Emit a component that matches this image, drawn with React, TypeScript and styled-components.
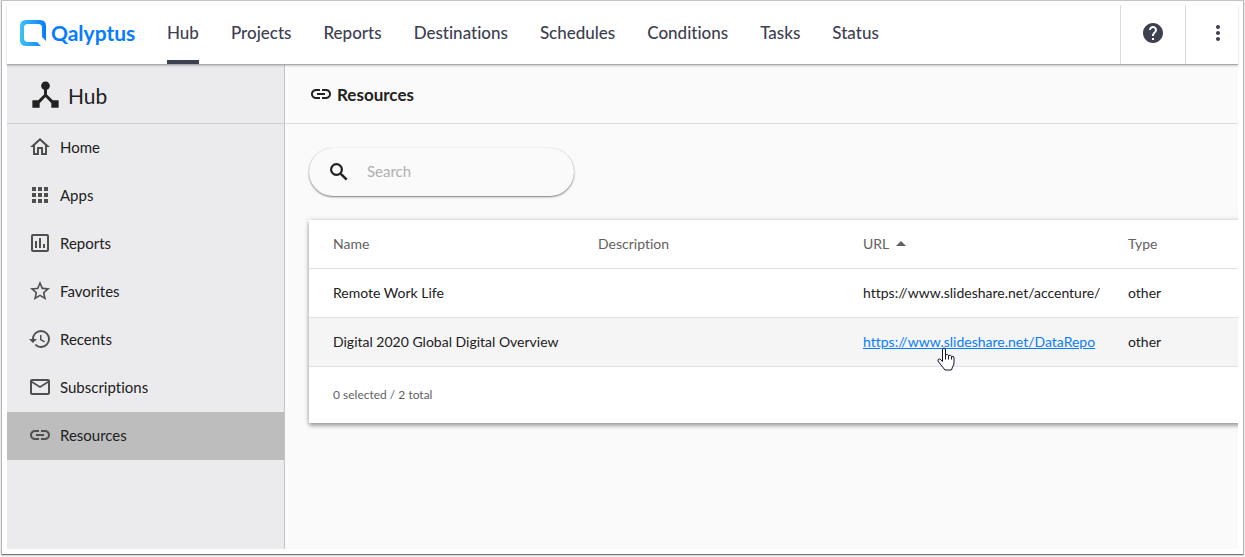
import React from "react";
import styled, { createGlobalStyle } from "styled-components";
import {
  MdApps,
  MdDeviceHub,
  MdHelp,
  MdHistory,
  MdLink,
  MdMailOutline,
  MdMoreVert,
  MdOutlineAssessment,
  MdOutlineHome,
  MdStarBorder,
} from "react-icons/md";

const GlobalStyle = createGlobalStyle`
  *, *::before, *::after { box-sizing: border-box; }
  body {
    margin: 0;
    background: #f4f4f4;
    color: #212121;
    font-family: Lato, "Liberation Sans", sans-serif;
    font-size: 15px;
    font-variant-ligatures: none;
  }
  button, input { font: inherit; color: inherit; }
`;

const Frame = styled.div`
  display: flex;
  flex-direction: column;
  min-height: calc(100vh - 4px);
  margin: 1px 2px 3px;
  padding: 4px 5px 5px;
  background: #fff;
  box-shadow: 0 0 1px 1px rgba(0, 0, 0, 0.2), 0 1px 1px rgba(0, 0, 0, 0.4);
`;

const TopBar = styled.header`
  position: relative;
  display: flex;
  height: 60px;
  padding-left: 13px;
  border-bottom: 1px solid #a9a9ab;
  box-shadow: 0 1px 2px rgba(0, 0, 0, 0.2);
  background: #fff;
  color: #3d4051;
`;

const Brand = styled.a`
  display: flex;
  align-items: center;
  gap: 5px;
  width: 147px;
  padding-bottom: 4px;
  color: #087cff;
  font-size: 21px;
  font-weight: 700;
  text-decoration: none;
`;

const Nav = styled.nav`
  display: flex;
  flex: 1;
  gap: 32px;
`;

const NavLink = styled.a<{ $active?: boolean }>`
  display: flex;
  align-items: center;
  border-bottom: 4px solid ${(p) => (p.$active ? "#3d4051" : "transparent")};
  color: inherit;
  font-size: 17px;
  font-weight: 500;
  text-decoration: none;
`;

const BarButton = styled.button<{ $narrow?: boolean }>`
  display: flex;
  align-items: center;
  justify-content: center;
  width: ${(p) => (p.$narrow ? 53 : 65)}px;
  padding: 0 0 4px;
  padding-left: ${(p) => (p.$narrow ? 12 : 0)}px;
  border: 0;
  border-left: 1px solid #dcdcdc;
  background: none;
`;

const Body = styled.div`
  display: flex;
  flex: 1;
`;

const SideBar = styled.aside`
  flex: none;
  width: 278px;
  border-right: 1px solid #c4c4c6;
  background: #ebebed;
`;

const SideTitle = styled.h1`
  display: flex;
  align-items: center;
  gap: 5px;
  height: 59px;
  margin: 0;
  padding-left: 21px;
  border-bottom: 1px solid #cfcfd1;
  font-size: 21px;
  font-weight: 400;
`;

const SideTitleText = styled.span`
  padding-top: 2px;
`;

const SideLink = styled.a<{ $active?: boolean }>`
  display: flex;
  align-items: center;
  gap: 8px;
  height: 48px;
  padding: 0 0 2px 21px;
  background: ${(p) => (p.$active ? "#bdbdbd" : "transparent")};
  color: #212121;
  text-decoration: none;

  svg { color: #4f4f50; }
`;

const Main = styled.main`
  flex: 1;
  min-width: 0;
  overflow: hidden;
  background: #fafafa;
`;

const PageTitle = styled.h2`
  display: flex;
  align-items: center;
  gap: 4px;
  height: 59px;
  margin: 0;
  padding-left: 24px;
  border-bottom: 1px solid #dedede;
  font-size: 17px;
  font-weight: 700;
`;

const Content = styled.div`
  padding: 24px;
`;

const SearchBox = styled.label`
  display: flex;
  align-items: center;
  gap: 16px;
  width: 265px;
  height: 48px;
  margin-bottom: 24px;
  padding: 0 24px 0 18px;
  border-radius: 24px;
  box-shadow: 0 1px 2px rgba(0, 0, 0, 0.5), 0 0 1px rgba(0, 0, 0, 0.1);
`;

const SearchInput = styled.input`
  flex: 1;
  min-width: 0;
  padding: 0 0 2px;
  border: 0;
  outline: 0;
  background: none;

  &::placeholder { color: #b0b0b0; opacity: 1; }
`;

const Card = styled.section`
  width: max(100%, 1084px);
  background: #fff;
  box-shadow: 0 3px 4px rgba(0, 0, 0, 0.3), 0 0 5px rgba(0, 0, 0, 0.2);
`;

const Table = styled.table`
  width: 100%;
  border-collapse: separate;
  border-spacing: 0;
  table-layout: fixed;
  font-size: 14px;
`;

const Col = styled.col<{ $first?: boolean }>`
  width: ${(p) => (p.$first ? 289 : 265)}px;
`;

const HeadCell = styled.th`
  height: 49px;
  padding: 0 24px 2px 0;
  border-bottom: 1px solid #e0e0e0;
  color: #616161;
  font-weight: 400;
  text-align: left;

  &:first-child { padding-left: 24px; }
`;

const Sort = styled.button`
  display: flex;
  align-items: center;
  gap: 7px;
  padding: 0;
  border: 0;
  background: none;
`;

const Row = styled.tr<{ $hover?: boolean }>`
  background: ${(p) => (p.$hover ? "#f5f5f5" : "#fff")};
`;

const Cell = styled.td`
  height: 49px;
  padding: 0 24px 2px 0;
  border-bottom: 1px solid #e0e0e0;
  white-space: nowrap;

  &:first-child { padding-left: 24px; }
`;

const UrlLink = styled.a<{ $hover?: boolean }>`
  position: relative;
  color: ${(p) => (p.$hover ? "#087cff" : "inherit")};
  text-decoration: ${(p) => (p.$hover ? "underline" : "none")};
`;

const Pointer = styled.svg`
  position: absolute;
  left: 74px;
  top: 14px;
`;

const Summary = styled.p`
  display: flex;
  align-items: center;
  height: 56px;
  margin: 0;
  padding: 0 0 2px 24px;
  color: #616161;
  font-size: 12px;
`;

const navItems = ["Hub", "Projects", "Reports", "Destinations", "Schedules", "Conditions", "Tasks", "Status"];

const sideItems = [
  { label: "Home", Icon: MdOutlineHome },
  { label: "Apps", Icon: MdApps },
  { label: "Reports", Icon: MdOutlineAssessment },
  { label: "Favorites", Icon: MdStarBorder },
  { label: "Recents", Icon: MdHistory },
  { label: "Subscriptions", Icon: MdMailOutline },
  { label: "Resources", Icon: MdLink },
];

const resources = [
  { name: "Remote Work Life", url: "https://www.slideshare.net/accenture/", type: "other", hover: false },
  { name: "Digital 2020 Global Digital Overview", url: "https://www.slideshare.net/DataRepo", type: "other", hover: true },
];

function LogoMark() {
  return (
    <svg width="26" height="26" viewBox="0 0 26 26" aria-hidden="true">
      <defs>
        <linearGradient id="mark" x1="0" y1="0" x2="1" y2="0">
          <stop offset="0" stopColor="#3fc3f3" />
          <stop offset="1" stopColor="#087cff" />
        </linearGradient>
      </defs>
      <path
        fill="url(#mark)"
        d="M6 0H20Q26 0 26 6V21L22 17V8Q22 4 18 4H8Q4 4 4 8V18Q4 22 8 22H17L21 26H6Q0 26 0 20V6Q0 0 6 0Z"
      />
    </svg>
  );
}

function SearchIcon() {
  return (
    <svg width="24" height="24" viewBox="0 0 24 24" fill="none" stroke="currentColor" aria-hidden="true">
      <circle cx="9.500" cy="9.500" r="5.400" strokeWidth="2.200" />
      <path d="M13.800 13.800L19.700 19.700" strokeWidth="2.500" />
    </svg>
  );
}

function HandPointer() {
  return (
    <Pointer width="18" height="24" viewBox="0 0 18 24" aria-hidden="true">
      <path
        d="M5.5 14.5V3Q5.5 1 7 1T8.500 3V8Q11 6.500 11.500 8.500Q14 7.500 14.500 9.500Q17 8.500 17 11V16Q17 18 15.500 20L14.500 23H8L4 18L1 14Q.5 12 2.500 12Q4 12.500 5.500 14.500Z"
        fill="#fff"
        stroke="#14142b"
      />
      <path d="M8.500 8V12.500M11.500 8.500V12.500M14.500 9.500V12.500" stroke="#14142b" fill="none" />
    </Pointer>
  );
}

export default function App() {
  return (
    <>
      <GlobalStyle />
      <Frame>
        <TopBar>
          <Brand href="#home">
            <LogoMark />
            Qalyptus
          </Brand>
          <Nav>
            {navItems.map((item) => (
              <NavLink key={item} href={`#${item}`} $active={item === "Hub"}>
                {item}
              </NavLink>
            ))}
          </Nav>
          <BarButton aria-label="Help">
            <MdHelp size={24} />
          </BarButton>
          <BarButton aria-label="More" $narrow>
            <MdMoreVert size={24} />
          </BarButton>
        </TopBar>
        <Body>
          <SideBar>
            <SideTitle>
              <MdDeviceHub size={35} />
              <SideTitleText>Hub</SideTitleText>
            </SideTitle>
            {sideItems.map(({ label, Icon }) => (
              <SideLink key={label} href={`#${label}`} $active={label === "Resources"}>
                <Icon size={24} />
                {label}
              </SideLink>
            ))}
          </SideBar>
          <Main>
            <PageTitle>
              <MdLink size={24} />
              Resources
            </PageTitle>
            <Content>
              <SearchBox>
                <SearchIcon />
                <SearchInput type="text" placeholder="Search" aria-label="Search" />
              </SearchBox>
              <Card>
                <Table>
                  <colgroup>
                    <Col $first />
                    <Col />
                    <Col />
                    <Col />
                  </colgroup>
                  <thead>
                    <tr>
                      <HeadCell>Name</HeadCell>
                      <HeadCell>Description</HeadCell>
                      <HeadCell>
                        <Sort>
                          URL
                          <svg width="10" height="5" viewBox="0 0 10 5" aria-hidden="true">
                            <path d="M0 5L5 0L10 5Z" fill="#616161" />
                          </svg>
                        </Sort>
                      </HeadCell>
                      <HeadCell>Type</HeadCell>
                    </tr>
                  </thead>
                  <tbody>
                    {resources.map((r) => (
                      <Row key={r.name} $hover={r.hover}>
                        <Cell>{r.name}</Cell>
                        <Cell />
                        <Cell>
                          <UrlLink href={r.url} $hover={r.hover}>
                            {r.url}
                            {r.hover && <HandPointer />}
                          </UrlLink>
                        </Cell>
                        <Cell>{r.type}</Cell>
                      </Row>
                    ))}
                  </tbody>
                </Table>
                <Summary>0 selected / 2 total</Summary>
              </Card>
            </Content>
          </Main>
        </Body>
      </Frame>
    </>
  );
}
